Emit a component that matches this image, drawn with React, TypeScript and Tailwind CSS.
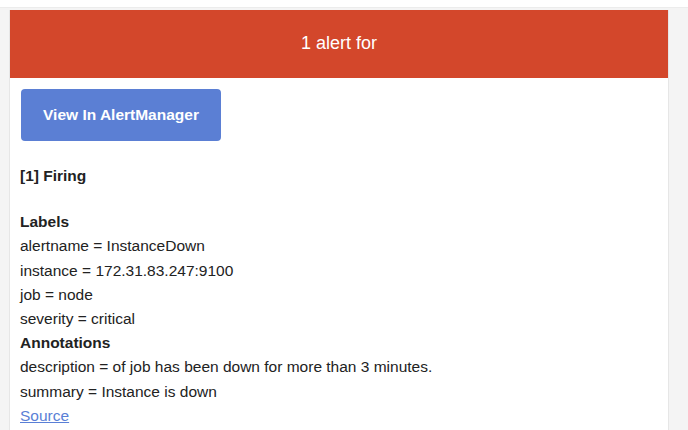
const labels = [
    "alertname = InstanceDown",
    "instance = 172.31.83.247:9100",
    "job = node",
    "severity = critical",
];

const annotations = [
    "description = of job has been down for more than 3 minutes.",
    "summary = Instance is down",
];

export default function App() {
    return (
        <div className="h-[430px] w-[688px] overflow-hidden bg-white font-['Liberation_Sans',Arial,sans-serif]">
            <div className="mt-[7px] h-[423px] border-t border-[#ececec] bg-[#f4f4f4] pl-[9px] pr-[19px] pt-[2px]">
                <div className="h-[460px] border-x border-[#e6e6e6] bg-white">
                    <header className="flex h-[68px] items-center justify-center bg-[#d3472b] pb-[2px] text-[18px] text-white">
                        1 alert for
                    </header>
                    <div className="px-[10px] pt-[11px] text-[15.5px] leading-[24.2px] text-[#222]">
                        <a
                            href="#"
                            className="ml-px flex h-[52px] w-[200px] items-center justify-center rounded-[4px] bg-[#5b7fd4] text-[15.5px] font-bold text-white"
                        >
                            View In AlertManager
                        </a>
                        <div className="mt-[23px] mb-[22px] font-bold">[1] Firing</div>
                        <div className="font-bold">Labels</div>
                        {labels.map((l) => (
                            <div key={l}>{l}</div>
                        ))}
                        <div className="font-bold">Annotations</div>
                        {annotations.map((a) => (
                            <div key={a}>{a}</div>
                        ))}
                        <a href="#" className="text-[#5a7fd6] underline">
                            Source
                        </a>
                    </div>
                </div>
            </div>
        </div>
    );
}
